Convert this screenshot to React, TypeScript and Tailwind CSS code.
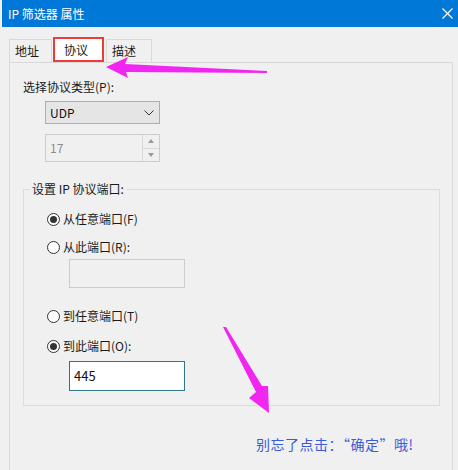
import React from "react";

const font = { fontFamily: '"Noto Sans CJK SC", "Noto Sans", sans-serif' };

function Radio({ checked, label }: { checked?: boolean; label: string }) {
  return (
    <div className="flex items-center h-[16px] ml-[23px] gap-[3px] text-[12px] text-[#1a1a1a]">
      <span className="w-[13px] h-[13px] rounded-full border border-[#333] bg-white flex items-center justify-center">
        {checked && <span className="w-[7px] h-[7px] rounded-full bg-[#333]" />}
      </span>
      <span className="leading-[16px]">{label}</span>
    </div>
  );
}

export default function App() {
  return (
    <div className="relative w-[458px] h-[470px] overflow-hidden bg-[#f0f0f0]" style={font}>
      {/* title bar */}
      <div className="ml-[2px] h-[27px] bg-[#0078d7] flex items-center justify-between pl-[6px] pr-[5px]">
        <span className="text-white text-[12px] leading-none">IP 筛选器 属性</span>
        <svg width="11" height="11" viewBox="0 0 11 11">
          <path d="M0.5 0.5 L10.5 10.5 M10.5 0.5 L0.5 10.5" stroke="#fff" strokeWidth="1.2" />
        </svg>
      </div>

      <div className="pl-[9px] pr-[5px] pt-[10px]">
        {/* tabs */}
        <div className="flex items-end h-[25px] text-[12px] text-[#1a1a1a]">
          <div className="h-[23px] w-[43px] border border-b-0 border-[#d9d9d9] bg-[#f0f0f0] pl-[5px] leading-[22px]">地址</div>
          <div className="h-[25px] w-[51px] ml-[1px] border-2 border-b-2 border-[#f03a3a] bg-white pl-[9px] leading-[21px] z-10">协议</div>
          <div className="h-[23px] w-[46px] ml-[2px] border border-b-0 border-[#d9d9d9] bg-[#f0f0f0] pl-[5px] leading-[22px]">描述</div>
        </div>

        {/* panel */}
        <div className="h-[420px] w-[444px] border border-[#d9d9d9] bg-[#f0f0f0] pl-[13px] pt-[16px] text-[12px] text-[#1a1a1a]">
          <div className="h-[16px] leading-[16px]">选择协议类型(P):</div>

          <div className="mt-[6px] ml-[22px] w-[115px] h-[23px] border border-[#adadad] bg-[#e5e5e5] flex items-center justify-between pl-[4px] pr-[5px]">
            <span className="text-[12px] text-[#111]">UDP</span>
            <svg width="10" height="6" viewBox="0 0 10 6">
              <path d="M0.5 0.5 L5 5 L9.5 0.5" fill="none" stroke="#333" strokeWidth="1" />
            </svg>
          </div>

          <div className="mt-[10px] ml-[22px] w-[115px] h-[28px] border border-[#cccccc] bg-[#f0f0f0] flex">
            <span className="flex-1 pl-[4px] leading-[26px] text-[#8c8c8c]">17</span>
            <div className="w-[17px] border-l border-[#d9d9d9] flex flex-col">
              <div className="flex-1 flex items-center justify-center border-b border-[#d9d9d9]">
                <svg width="6" height="4" viewBox="0 0 6 4"><path d="M0 4 L3 0 L6 4 Z" fill="#9a9a9a" /></svg>
              </div>
              <div className="flex-1 flex items-center justify-center">
                <svg width="6" height="4" viewBox="0 0 6 4"><path d="M0 0 L3 4 L6 0 Z" fill="#9a9a9a" /></svg>
              </div>
            </div>
          </div>

          <fieldset className="mt-[19px] w-[417px] h-[225px] border border-[#dcdcdc] pb-[14px]">
            <legend className="ml-[6px] px-[2px] leading-[16px] text-[12px]">设置 IP 协议端口:</legend>
            <div className="pt-[14px]">
              <Radio checked label="从任意端口(F)" />
              <div className="mt-[12px]"><Radio label="从此端口(R):" /></div>
              <div className="mt-[4px] ml-[45px] w-[116px] h-[29px] border border-[#cccccc] bg-[#f0f0f0]" />
              <div className="mt-[20px]"><Radio label="到任意端口(T)" /></div>
              <div className="mt-[14px]"><Radio checked label="到此端口(O):" /></div>
              <div className="mt-[7px] ml-[45px] w-[116px] h-[30px] border border-[#2f7488] bg-white pl-[4px] leading-[27px] text-[13px] text-[#111]">445</div>
            </div>
          </fieldset>

          <div className="mt-[30px] ml-[233px] text-[14px] leading-[16px] text-[#3a5bd9] tracking-[0.5px]">别忘了点击：“确定”哦!</div>
        </div>
      </div>

      {/* annotation arrows */}
      <svg className="absolute left-0 top-0 pointer-events-none" width="458" height="470" viewBox="0 0 458 470">
        <polygon points="106,67 128,57 125,64 267,71 267,73 126,72 128,78" fill="#f126f1" />
        <polygon points="223,327 226,327 262,386 268,386 269,413 249,398 256,392" fill="#f126f1" />
      </svg>
    </div>
  );
}
